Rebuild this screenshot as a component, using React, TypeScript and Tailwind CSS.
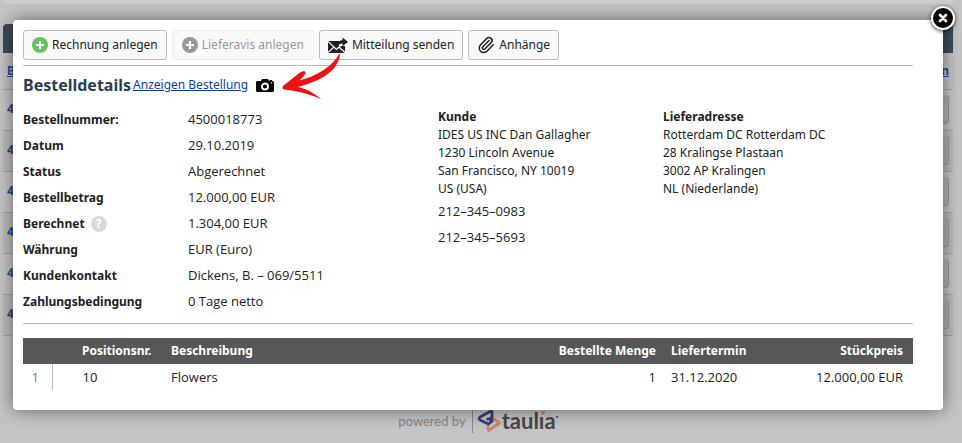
import { useState, type ReactNode } from "react";
import { Paperclip } from "lucide-react";

const details = [
    { label: "Bestellnummer:", value: "4500018773" },
    { label: "Datum", value: "29.10.2019" },
    { label: "Status", value: "Abgerechnet" },
    { label: "Bestellbetrag", value: "12.000,00 EUR" },
    { label: "Berechnet", value: "1.304,00 EUR", help: true },
    { label: "Währung", value: "EUR (Euro)" },
    { label: "Kundenkontakt", value: "Dickens, B. – 069/5511" },
    { label: "Zahlungsbedingung", value: "0 Tage netto" },
];

const positions = [
    { nr: "10", text: "Flowers", amount: "1", date: "31.12.2020", price: "12.000,00 EUR" },
];

const orderRows = [1, 2, 3, 4, 5, 6];

function PlusIcon() {
    return (
        <svg width="16" height="16" viewBox="0 0 16 16" aria-hidden="true">
            <circle cx="8" cy="8" r="8" fill="currentColor" />
            <path d="M8 4v8M4 8h8" stroke="#fff" strokeWidth="2.2" />
        </svg>
    );
}

function MailIcon() {
    return (
        <svg width="20" height="16" viewBox="0 0 20 16" aria-hidden="true">
            <path d="M0 4h17v12H0z" fill="#222" />
            <path d="M0 4.500 8.500 12.500 17 4.500M0 15.500l6-5.500M17 15.500 11 10" fill="none" stroke="#f9f9f9" strokeWidth="1.200" />
            <path d="M11 4h6v5h-6z" fill="#f9f9f9" />
            <path d="M9.500 9.500c0-4 1.500-6.200 5-6.200V.5L20 4.900l-5.500 4.400V6.500c-2.500 0-3.500.8-5 3z" fill="#222" />
        </svg>
    );
}

function CameraIcon() {
    return (
        <svg width="18" height="13" viewBox="0 0 18 13" aria-hidden="true">
            <path d="M1.500 2H5l1-2h6l1 2h.5V1H16v1h.5Q18 2 18 3.500v8q0 1.500-1.500 1.500h-15Q0 13 0 11.500v-8Q0 2 1.500 2z" fill="#000" />
            <circle cx="9" cy="7.500" r="3" fill="#000" stroke="#fff" strokeWidth="1.800" />
            <circle cx="15.500" cy="4" r=".7" fill="#fff" />
        </svg>
    );
}

function Arrow() {
    return (
        <svg className="pointer-events-none absolute left-[268px] top-[32px]" width="60" height="50" viewBox="0 0 60 50" aria-hidden="true">
            <path
                d="M59 2C58 15 46 26 25 32.500L17 35C26 37 33 41 40.500 47.500 31 43 20 39.500 3 37.500Q0 36 2.500 33.500L19 20.500Q25 17 24.500 21.500 22 25 18.500 28.500C36 24 52 14 58 2z"
                fill="#ee1111"
            />
        </svg>
    );
}

function TauliaMark() {
    return (
        <svg width="24" height="24" viewBox="0 0 24 24" fill="none" strokeWidth="2.800" strokeLinejoin="round" aria-hidden="true">
            <path d="M16.500 9.500 22.500 14 11.500 21.500 10.500 16" stroke="#cf8361" />
            <path d="M15 13.500V3.500Q15 1.500 13 2.500L3 8Q1 9.500 3 11l8.500 4 2.500-2-1-3.500-3.500 1" stroke="#35427c" />
        </svg>
    );
}

function ToolButton({ icon, children, disabled }: { icon: ReactNode; children: ReactNode; disabled?: boolean }) {
    return (
        <button
            disabled={disabled}
            className="flex h-[30px] items-center gap-1 rounded-[3px] border border-[#bbb] bg-[#f9f9f9] px-2 text-[#222] disabled:border-[#eee] disabled:px-[9px] disabled:text-[#999]"
        >
            {icon}
            {children}
        </button>
    );
}

function OrderList() {
    return (
        <div className="pl-[3px] pr-[9px]">
            <div className="h-1 rounded-b bg-[#cecece]" />
            <table className="mt-5 w-full border-collapse font-bold text-[#24469c]">
                <caption className="h-[29px] rounded-t bg-[#3c4c5a]" />
                <thead>
                    <tr className="h-9 border-b border-[#a5a5a5] bg-[#c2c2c2]">
                        <th className="px-1 text-left"><a href="#nr" className="underline">B</a></th>
                        <th className="px-1 text-right"><a href="#aktion" className="underline">n</a></th>
                    </tr>
                </thead>
                <tbody>
                    {orderRows.map((row) => (
                        <tr key={row} className="h-[41px] border-b border-[#a5a5a5] odd:bg-[#c6c6c6] even:bg-[#bcbcbc]">
                            <td className="px-1 pb-px"><a href="#order">4</a></td>
                            <td className="px-1">
                                <button aria-label="Aktion" className="ml-auto block h-[29px] w-20 rounded border-b border-r border-[#999] bg-[#b4b4b4]" />
                            </td>
                        </tr>
                    ))}
                </tbody>
            </table>
            <footer className="mt-[73px] flex items-center justify-center gap-[6px]">
                <span className="font-[Lato] text-[13px] text-[#858585]">powered by</span>
                <span className="flex items-center border-l border-[#858585] pl-1">
                    <TauliaMark />
                    <span className="pl-px font-[Lato] text-[22px] font-bold leading-6 text-[#484848]">
                        taul<span className="relative">ı<span className="absolute left-[2px] top-1 size-1 rounded-full bg-[#cf8361]" /></span>a
                    </span>
                    <span className="mb-2 size-[2px] rounded-full bg-[#484848]" />
                </span>
            </footer>
        </div>
    );
}

function OrderDialog({ onClose }: { onClose: () => void }) {
    return (
        <div role="dialog" aria-label="Bestelldetails" className="relative rounded bg-white pb-5 pl-[10px] pr-[30px] pt-[10px] shadow-[0_0_18px_rgba(0,0,0,0.5)]">
            <button
                aria-label="Schließen"
                onClick={onClose}
                className="absolute -right-3 -top-[14px] flex size-6 items-center justify-center rounded-full border-2 border-white bg-black shadow-[0_1px_4px_rgba(0,0,0,0.8)]"
            >
                <svg width="10" height="10" viewBox="0 0 10 10" aria-hidden="true">
                    <path d="m2 2 6 6M8 2 2 8" stroke="#fff" strokeWidth="2.800" strokeLinecap="round" />
                </svg>
            </button>

            <div className="flex gap-[5px] border-b border-[#bbb] pb-[5px]">
                <ToolButton icon={<span className="text-[#62c462]"><PlusIcon /></span>}>Rechnung anlegen</ToolButton>
                <ToolButton icon={<PlusIcon />} disabled>Lieferavis anlegen</ToolButton>
                <ToolButton icon={<MailIcon />}>Mitteilung senden</ToolButton>
                <ToolButton icon={<Paperclip size={18} strokeWidth={2} />}>Anhänge</ToolButton>
            </div>

            <div className="flex h-10 items-center pb-[2px]">
                <h1 className="pr-[2px] text-base font-bold text-[#263f50]">Bestelldetails</h1>
                <a href="#bestellung" className="mr-2 text-[#0e3fa8] underline">Anzeigen Bestellung</a>
                <CameraIcon />
            </div>

            <div className="grid grid-cols-[415fr_225fr_250fr] border-b border-[#bbb] pb-[9px]">
                <dl>
                    {details.map((item) => (
                        <div key={item.label} className="flex h-[26px] items-center">
                            <dt className="flex w-[165px] items-center gap-[6px] pt-px font-bold">
                                {item.label}
                                {item.help && (
                                    <span className="flex size-4 items-center justify-center rounded-full bg-[#d8d8d8] text-white">?</span>
                                )}
                            </dt>
                            <dd className="font-['Open_Sans',sans-serif] text-[13px]">{item.value}</dd>
                        </div>
                    ))}
                </dl>
                <address className="pt-[2px] not-italic leading-[18px]">
                    <strong>Kunde</strong>
                    <p>IDES US INC Dan Gallagher</p>
                    <p>1230 Lincoln Avenue</p>
                    <p>San Francisco, NY 10019</p>
                    <p>US (USA)</p>
                    <p className="font-['Open_Sans',sans-serif] text-[13px] leading-[26px]">212–345–0983</p>
                    <p className="font-['Open_Sans',sans-serif] text-[13px] leading-[26px]">212–345–5693</p>
                </address>
                <address className="pt-[2px] not-italic leading-[18px]">
                    <strong>Lieferadresse</strong>
                    <p>Rotterdam DC Rotterdam DC</p>
                    <p>28 Kralingse Plastaan</p>
                    <p>3002 AP Kralingen</p>
                    <p>NL (Niederlande)</p>
                </address>
            </div>

            <table className="mt-[14px] w-full table-fixed border-collapse">
                <thead>
                    <tr className="h-[26px] bg-[#575757] text-white">
                        <th className="w-[29px]" />
                        <th className="w-[111px] pl-[30px] text-left">Positionsnr.</th>
                        <th className="pl-2 text-left">Beschreibung</th>
                        <th className="w-[120px] pr-[7px] text-right">Bestellte Menge</th>
                        <th className="w-[120px] pl-2 text-left">Liefertermin</th>
                        <th className="w-[130px] pr-[10px] text-right">Stückpreis</th>
                    </tr>
                </thead>
                <tbody className="font-['Open_Sans',sans-serif] text-[13px]">
                    {positions.map((pos, idx) => (
                        <tr key={pos.nr} className="h-[26px]">
                            <td className="border-r border-[#bbb] pr-1 text-center text-[#777]">{idx + 1}</td>
                            <td className="pl-[30px]">{pos.nr}</td>
                            <td className="pl-2">{pos.text}</td>
                            <td className="pr-[7px] text-right">{pos.amount}</td>
                            <td className="pl-2">{pos.date}</td>
                            <td className="pr-[10px] text-right">{pos.price}</td>
                        </tr>
                    ))}
                </tbody>
            </table>
            <Arrow />
        </div>
    );
}

export default function App() {
    const [open, setOpen] = useState(true);

    return (
        <div className="relative min-h-screen overflow-hidden bg-[#c4c4c4] font-['Noto_Sans',sans-serif] text-xs leading-[18px] text-[#222]">
            <OrderList />
            {open && (
                <div className="absolute inset-x-0 top-0 pl-[13px] pr-[19px] pt-5">
                    <OrderDialog onClose={() => setOpen(false)} />
                </div>
            )}
        </div>
    );
}
